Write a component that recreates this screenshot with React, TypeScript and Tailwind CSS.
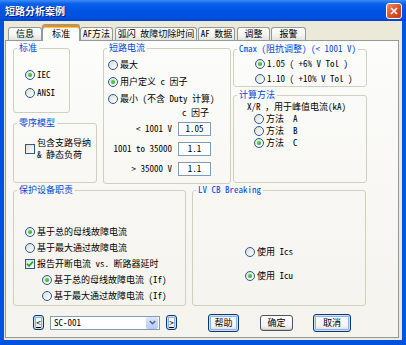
import clsx from 'clsx'
import type { ReactNode } from 'react'

const xpFont = "font-['Noto_Sans_Mono_CJK_SC','Noto_Sans_CJK_SC',sans-serif]"

function Radio({ checked = false }: { checked?: boolean }) {
  return (
    <span className="flex h-[10px] w-[10px] shrink-0 items-center justify-center rounded-full border border-[#2A5A8C] bg-[linear-gradient(135deg,#DCDBD4,#FFFFFF)]">
      {checked && <span className="h-[4px] w-[4px] rounded-full bg-[radial-gradient(circle_at_35%_35%,#5BD85B,#1E9E1E)]" />}
    </span>
  )
}

function Check({ checked = false }: { checked?: boolean }) {
  return (
    <span className="flex h-[10px] w-[10px] shrink-0 items-center justify-center border border-[#2A5A8C] bg-[linear-gradient(135deg,#DCDBD4,#FFFFFF)]">
      {checked && (
        <svg width="8" height="8" viewBox="0 0 8 8">
          <path d="M1 3.8 L3 6 L7 1.6" stroke="#21A121" strokeWidth="1.6" fill="none" />
        </svg>
      )}
    </span>
  )
}

function RadioRow({ checked, children, className }: { checked?: boolean; children: ReactNode; className?: string }) {
  return (
    <div className={clsx('flex items-center gap-[2px] whitespace-pre', className ?? 'h-[12px] leading-[12px]')}>
      <Radio checked={checked} />
      <span>{children}</span>
    </div>
  )
}

function Group({ title, className, children }: { title: string; className?: string; children?: ReactNode }) {
  return (
    <fieldset className={clsx('shrink-0 rounded-[3px] border border-[#D0D0BF]', className)}>
      <legend className="ml-[3px] px-[2px] leading-[12px] whitespace-pre text-[#0046D5]">{title}</legend>
      {children}
    </fieldset>
  )
}

function Tab({ label, active, className }: { label: string; active?: boolean; className?: string }) {
  if (active) {
    return (
      <div
        className={clsx(
          'relative z-10 -mb-px flex h-[17px] items-center justify-center rounded-t-[3px] border border-b-0 border-[#919B9C] bg-[#FCFCFA] shadow-[inset_0_2px_0_#E68B2C,inset_0_3px_0_#FFC73C]',
          className,
        )}
      >
        <span className="mt-[2px]">{label}</span>
      </div>
    )
  }
  return (
    <div
      className={clsx(
        'flex h-[13px] items-center justify-center whitespace-pre rounded-t-[3px] border border-b-0 border-[#919B9C] bg-[linear-gradient(to_bottom,#FFFFFF,#F3F3EF_60%,#E4E3DC)]',
        className,
      )}
    >
      {label}
    </div>
  )
}

function XpButton({ children, className, ring = true }: { children: ReactNode; className?: string; ring?: boolean }) {
  return (
    <div
      className={clsx(
        'flex shrink-0 items-center justify-center rounded-[3px] border bg-[linear-gradient(to_bottom,#FFFFFF,#F4F3EE_70%,#DCD8CC)]',
        ring
          ? 'border-[#003C74] shadow-[inset_0_0_0_1px_#CEDDF9,inset_0_0_0_2px_#8EB1EC]'
          : 'border-[#45566A] shadow-[inset_0_-1px_0_#C9C5B8]',
        className,
      )}
    >
      {children}
    </div>
  )
}

const tabs = [
  { label: '信息', w: 'w-[34px]', ml: 'ml-[3px]' },
  { label: '标准', w: 'w-[38px]', ml: 'ml-0', active: true },
  { label: 'AF方法', w: 'w-[33px]', ml: 'ml-0' },
  { label: '弧闪 故障切除时间', w: 'w-[82px]', ml: 'ml-[2px]' },
  { label: 'AF 数据', w: 'w-[37px]', ml: 'ml-[1px]' },
  { label: '调整', w: 'w-[33px]', ml: 'ml-[2px]' },
  { label: '报警', w: 'w-[35px]', ml: 'ml-[1px]' },
]

const cFactors = [
  { label: '< 1001 V', value: '1.05' },
  { label: '1001 to 35000', value: '1.1' },
  { label: '> 35000 V', value: '1.1' },
]

export default function App() {
  return (
    <div className={clsx('flex h-[345px] w-[406px] flex-col bg-[#0052E2] text-[9px] text-black', xpFont)}>
      {/* title bar */}
      <div className="flex h-[21px] shrink-0 items-center justify-between bg-[linear-gradient(to_bottom,#3D8EF7_0%,#0A5FEA_18%,#0054E3_50%,#0050DE_85%,#0042C8_100%)] pl-[5px] pr-[4px]">
        <span className="text-[10px] font-bold leading-[12px] text-white [text-shadow:1px_1px_0_#0A1E80]">短路分析案例</span>
        <div className="flex h-[16px] w-[16px] items-center justify-center rounded-[3px] border border-white bg-[linear-gradient(135deg,#F08A6A,#D9502A_55%,#C23A16)]">
          <svg width="8" height="8" viewBox="0 0 8 8">
            <path d="M1 1 L7 7 M7 1 L1 7" stroke="white" strokeWidth="1.6" />
          </svg>
        </div>
      </div>

      {/* dialog body */}
      <div className="mx-[4px] flex h-[319px] shrink-0 flex-col bg-[#ECE9D8] pt-[3px]">
        <div className="ml-[1px] flex h-[16px] items-end">
          {tabs.map(t => (
            <Tab key={t.label} label={t.label} active={t.active} className={clsx(t.w, t.ml)} />
          ))}
        </div>

        <div className="ml-[1px] flex h-[298px] w-[394px] flex-col border border-[#919B9C] bg-[linear-gradient(to_bottom,#FCFCFA,#F4F3EE)] pl-[7px] pt-[1px]">
          {/* top row */}
          <div className="flex h-[142px]">
            <div className="flex w-[84px] flex-col">
              <Group title="标准" className="h-[71px] w-[57px]">
                <div className="flex flex-col gap-[6px] pl-[11px] pt-[15px]">
                  <RadioRow checked>IEC</RadioRow>
                  <RadioRow>ANSI</RadioRow>
                </div>
              </Group>
              <Group title="零序模型" className="mt-[4px] h-[66px] w-[84px]">
                <div className="flex items-center gap-[2px] pl-[11px] pt-[8px]">
                  <Check />
                  <div className="whitespace-pre leading-[12px]">
                    <div>包含支路导纳</div>
                    <div>& 静态负荷</div>
                  </div>
                </div>
              </Group>
            </div>

            <Group title="短路电流" className="ml-[6px] h-[142px] w-[128px]">
              <div className="flex flex-col gap-[5px] pl-[4px] pt-[5px]">
                <RadioRow>最大</RadioRow>
                <RadioRow checked>用户定义 c 因子</RadioRow>
                <RadioRow>最小 (不含 Duty 计算)</RadioRow>
              </div>
              <div className="mt-[2px] h-[12px] pl-[78px] leading-[12px]">c 因子</div>
              <div className="mt-[3px] grid grid-cols-[68px_33px] gap-x-[6px] gap-y-[6px]">
                {cFactors.map(r => (
                  <div key={r.label} className="contents">
                    <div className="flex h-[14px] items-center justify-end whitespace-pre">{r.label}</div>
                    <div className="flex h-[14px] items-center justify-center border border-[#7F9DB9] bg-white">{r.value}</div>
                  </div>
                ))}
              </div>
            </Group>

            <div className="ml-[2px] flex w-[134px] flex-col">
              <Group title="Cmax (阻抗调整) (< 1001 V)" className="mt-[1px] h-[44px] w-[134px]">
                <div className="flex flex-col gap-[3px] pl-[21px] pt-[3px]">
                  <RadioRow checked>1.05 ( +6% V Tol )</RadioRow>
                  <RadioRow>1.10 ( +10% V Tol )</RadioRow>
                </div>
              </Group>
              <Group title="计算方法" className="mt-[2px] h-[94px] w-[134px]">
                <div className="h-[12px] whitespace-pre pl-[13px] leading-[12px]">X/R ，用于峰值电流(kA)</div>
                <div className="flex flex-col pl-[20px]">
                  <RadioRow>方法  A</RadioRow>
                  <RadioRow>方法  B</RadioRow>
                  <RadioRow checked>方法  C</RadioRow>
                </div>
              </Group>
            </div>
          </div>

          {/* middle row */}
          <div className="flex h-[122px]">
            <Group title="保护设备职责" className="h-[122px] w-[173px]">
              <div className="flex flex-col gap-[4px] pl-[11px] pt-[30px]">
                <RadioRow checked>基于总的母线故障电流</RadioRow>
                <RadioRow>基于最大通过故障电流</RadioRow>
                <div className="flex h-[12px] items-center gap-[2px] whitespace-pre leading-[12px]">
                  <Check checked />
                  <span>报告开断电流 vs. 断路器延时</span>
                </div>
                <RadioRow checked className="ml-[17px] h-[12px] leading-[12px]">基于总的母线故障电流 (If)</RadioRow>
                <RadioRow className="ml-[17px] h-[12px] leading-[12px]">基于最大通过故障电流 (If)</RadioRow>
              </div>
            </Group>
            <Group title="LV CB Breaking" className="ml-[6px] h-[122px] w-[174px]">
              <div className="flex flex-col gap-[12px] pl-[52px] pt-[50px]">
                <RadioRow>使用 Ics</RadioRow>
                <RadioRow checked>使用 Icu</RadioRow>
              </div>
            </Group>
          </div>

          {/* bottom controls */}
          <div className="mt-[7px] flex h-[19px] items-center">
            <XpButton className="ml-[20px] h-[15px] w-[11px]">
              <span className="underline">&lt;</span>
            </XpButton>
            <div className="ml-[6px] flex h-[14px] w-[110px] items-center justify-between border border-[#7F9DB9] bg-white pl-[3px]">
              <span>SC-001</span>
              <div className="mr-px flex h-[12px] w-[12px] items-center justify-center rounded-[2px] bg-[linear-gradient(to_bottom,#DCE6FC,#B6CAF6)]">
                <svg width="7" height="5" viewBox="0 0 7 5">
                  <path d="M0.8 1 L3.5 3.8 L6.2 1" stroke="#4D6185" strokeWidth="1.4" fill="none" />
                </svg>
              </div>
            </div>
            <XpButton className="ml-[6px] h-[15px] w-[11px]">
              <span className="underline">&gt;</span>
            </XpButton>
            <XpButton className="ml-[31px] h-[18px] w-[31px]">帮助</XpButton>
            <XpButton ring={false} className="ml-[21px] h-[16px] w-[33px]">确定</XpButton>
            <XpButton className="ml-[20px] h-[18px] w-[38px]">取消</XpButton>
          </div>
        </div>
      </div>
    </div>
  )
}
